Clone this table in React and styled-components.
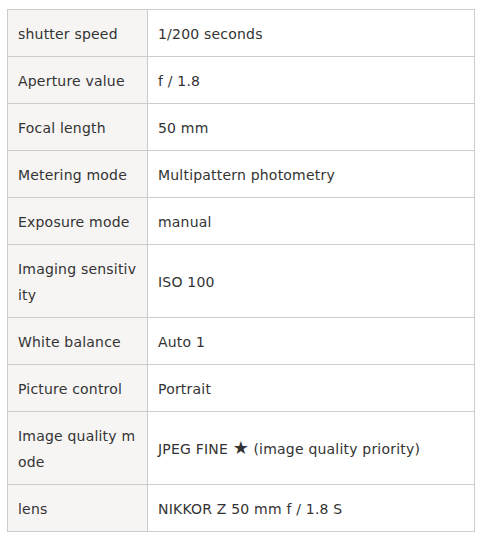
import React from "react";
import styled, { createGlobalStyle } from "styled-components";

const Global = createGlobalStyle`
  html, body { margin: 0; padding: 0; background: #fff; }
  body { font-family: Verdana, "DejaVu Sans", sans-serif; color: #333; }
`;

const Page = styled.div`
  padding: 9px 9px 6px 7px;
`;

const Table = styled.table`
  width: 468px;
  border-collapse: collapse;
  table-layout: fixed;
  border: 1px solid #cccccc;
  font-size: 14px;
  line-height: 26px;
  letter-spacing: 0.2px;
`;

const Row = styled.tr``;

const Cell = styled.td`
  border: 1px solid #cccccc;
  padding: 11px 10px 9px;
  vertical-align: middle;
  text-align: left;
  font-weight: normal;
  word-break: break-all;
  background: ${(p) => (p.$head ? "#f6f5f3" : "#ffffff")};
  color: #333;
`;

const Star = styled.span`
  font-size: 18px;
  line-height: 1;
  letter-spacing: 0;
`;

const rows = [
  ["shutter speed", "1/200 seconds"],
  ["Aperture value", "f / 1.8"],
  ["Focal length", "50 mm"],
  ["Metering mode", "Multipattern photometry"],
  ["Exposure mode", "manual"],
  ["Imaging sensitivity", "ISO 100"],
  ["White balance", "Auto 1"],
  ["Picture control", "Portrait"],
  [
    "Image quality mode",
    <>
      JPEG FINE <Star>{"\u2605"}</Star> (image quality priority)
    </>,
  ],
  ["lens", "NIKKOR Z 50 mm f / 1.8 S"],
];

export default function App() {
  return (
    <>
      <Global />
      <Page>
        <Table>
          <colgroup>
            <col style={{ width: 140 }} />
            <col />
          </colgroup>
          <tbody>
            {rows.map(([k, v]) => (
              <Row key={k}>
                <Cell as="th" $head>
                  {k}
                </Cell>
                <Cell>{v}</Cell>
              </Row>
            ))}
          </tbody>
        </Table>
      </Page>
    </>
  );
}
